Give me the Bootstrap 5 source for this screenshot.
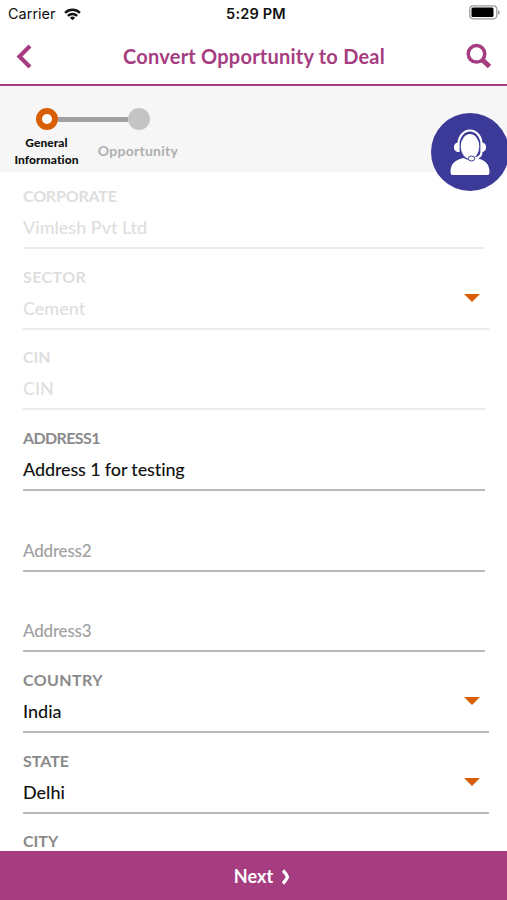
<!DOCTYPE html>
<html lang="en">
<head>
<meta charset="utf-8">
<meta name="viewport" content="width=device-width, initial-scale=1">
<title>Convert Opportunity to Deal</title>
<link href="https://cdn.jsdelivr.net/npm/bootstrap@5.3.0/dist/css/bootstrap.min.css" rel="stylesheet">
<style>
body{font-family:Lato,"Open Sans",sans-serif;color:#111;background:#fff}
.screen{height:900px;overflow:hidden}
.status{height:28px;font:15px/28px Inter,sans-serif;padding:0 7px 0 8px}
.carrier{font-size:14.5px}
.status .clock{left:0;right:0;font-weight:600;font-size:14.5px;letter-spacing:.2px;padding-left:5px}
.title-bar{height:58px;border-bottom:2px solid #a63d81;color:#a63d81;padding:0 15px 0 16px}
.title-bar h1{font-size:20px;line-height:55px;font-weight:700;letter-spacing:.22px;padding-left:8px}
.steps{height:86px;background:#f6f6f6;padding:22px 0 0 8px}
.step{width:77px;text-align:center}
.step-two{width:92px;margin-left:7px}
.step-dots{height:22px;padding-left:28px}
.dot{width:22px;height:22px;border-radius:50%;background:#c4c4c4}
.dot-on{background:#fff;border:6px solid #d95f07}
.dot-line{width:70px;height:5px;background:#a1a1a1}
.step-now{font-size:12px;line-height:17px;font-weight:900;letter-spacing:.05px;color:#111;padding-top:4px}
.step-next{font-size:14px;line-height:17px;font-weight:700;letter-spacing:.25px;color:#afafaf;padding-top:12px}
.help{right:-2px;top:113px;width:78px;height:78px}
.form-area{padding:0 22px 0 23px}
.field{height:80.67px;border-bottom:2px solid #b9b9b9;padding-bottom:8px}
.field:first-child{height:77px}
.field.pick{margin-right:-4px}
.field-name{font-size:16px;line-height:20px;font-weight:700;color:#8a8a8a;margin-bottom:9px}
.field-text{font-size:18px;line-height:24px;font-weight:500;color:#111}
.name-tight{letter-spacing:-.2px}
.name-digit{letter-spacing:-.62px}
.name-wide{letter-spacing:.4px}
.text-tight{letter-spacing:-.14px}
.field.off{border-color:#ececec}
.off .field-name,.off .field-text{color:#dedede}
.empty{padding-bottom:7px}
.empty .field-text{font-size:17px;color:#a0a0a0;letter-spacing:-.2px}
.caret{width:16px;height:8px;margin:0 9px 18px 0}
.next-bar{height:49px;background:#a63d81;color:#fff;font-size:18px;font-weight:700;letter-spacing:.1px;border:0;padding:2px 0 0 18px}
</style>
<script src="https://cdn.jsdelivr.net/npm/bootstrap@5.3.0/dist/js/bootstrap.bundle.min.js"></script>
</head>
<body>
<div class="screen d-flex flex-column position-relative">
  <div class="status d-flex align-items-center justify-content-between position-relative flex-shrink-0">
    <div class="d-flex align-items-center"><span class="carrier">Carrier</span>
      <svg class="ms-2" width="17" height="13" viewBox="0 0 18 14"><g fill="none" stroke="#111" stroke-width="2.600"><path d="M1 5.200a11.400 11.400 0 0 1 16 0"/><path d="M4 8.500a7.200 7.200 0 0 1 10 0"/></g><path d="M9 13.200L6.200 10.600a4 4 0 0 1 5.600 0z" fill="#111"/></svg>
    </div>
    <span class="clock position-absolute text-center">5:29 PM</span>
    <svg class="mb-1" width="31" height="15" viewBox="0 0 31 15"><rect x=".8" y=".8" width="27" height="13" rx="3.500" fill="#fff" stroke="#999" stroke-width="1.200"/><rect x="2.500" y="2.600" width="22" height="9.500" rx="1.500"/><path d="M29 5v5q1.700-.6 1.700-2.500T29 5z" fill="#999"/></svg>
  </div>
  <header class="title-bar d-flex align-items-center justify-content-between flex-shrink-0">
    <svg width="18" height="26" viewBox="0 0 18 26"><path d="M14 3L3.500 13.500L14 24" fill="none" stroke="#a63d81" stroke-width="4.200"/></svg>
    <h1 class="m-0">Convert Opportunity to Deal</h1>
    <svg width="26" height="26" viewBox="0 0 26 26" fill="none" stroke="#a63d81"><circle cx="10.500" cy="10.800" r="8.300" stroke-width="3.500"/><path d="M16.500 17l7 6.500" stroke-width="5"/></svg>
  </header>
  <section class="steps flex-shrink-0">
    <div class="step-dots d-flex align-items-center"><span class="dot dot-on"></span><span class="dot-line"></span><span class="dot"></span></div>
    <div class="d-flex"><div class="step step-now">General Information</div><div class="step step-two step-next">Opportunity</div></div>
  </section>
  <svg class="help position-absolute" viewBox="0 0 78 78"><circle cx="39" cy="39" r="39" fill="#3b3a99"/><g fill="#fff"><ellipse cx="39" cy="33.500" rx="9.300" ry="12.500"/><path d="M19.500 59.500c0-9.500 5-12.500 13-14.500q6.500 4 13 0c8 2 13 5 13 14.500q0 2.500-2 2.500H21.500q-2 0-2-2.500z"/><path d="M27 29.500v9.500a4.800 4.800 0 0 1 0-9.500zM51 29.500v9.500a4.800 4.800 0 0 0 0-9.500z"/></g><path d="M27.500 39v-8a11.500 13.500 0 0 1 23 0v8q0 6-8 6.500" fill="none" stroke="#fff" stroke-width="2.200"/><ellipse cx="40.500" cy="45.500" rx="3.200" ry="2.500" fill="#fff" stroke="#3b3a99"/></svg>
  <main class="form-area flex-grow-1 overflow-hidden">
    <div class="field off d-flex flex-column justify-content-end"><div class="field-name name-tight">CORPORATE</div><div class="field-text">Vimlesh Pvt Ltd</div></div>
    <div class="field off pick d-flex align-items-end justify-content-between"><div><div class="field-name name-wide">SECTOR</div><div class="field-text">Cement</div></div><svg class="caret" viewBox="0 0 16 8"><path d="M0 0h16L8 8z" fill="#d95f07"/></svg></div>
    <div class="field off d-flex flex-column justify-content-end"><div class="field-name">CIN</div><div class="field-text">CIN</div></div>
    <div class="field d-flex flex-column justify-content-end"><div class="field-name name-digit">ADDRESS1</div><div class="field-text text-tight">Address 1 for testing</div></div>
    <div class="field empty d-flex flex-column justify-content-end"><div class="field-text">Address2</div></div>
    <div class="field empty d-flex flex-column justify-content-end"><div class="field-text">Address3</div></div>
    <div class="field pick d-flex align-items-end justify-content-between"><div><div class="field-name name-wide">COUNTRY</div><div class="field-text">India</div></div><svg class="caret" viewBox="0 0 16 8"><path d="M0 0h16L8 8z" fill="#d95f07"/></svg></div>
    <div class="field pick d-flex align-items-end justify-content-between"><div><div class="field-name">STATE</div><div class="field-text">Delhi</div></div><svg class="caret" viewBox="0 0 16 8"><path d="M0 0h16L8 8z" fill="#d95f07"/></svg></div>
    <div class="field pick d-flex align-items-end"><div><div class="field-name">CITY</div><div class="field-text">&nbsp;</div></div></div>
  </main>
  <button type="button" class="next-bar w-100 d-flex align-items-center justify-content-center flex-shrink-0 gap-2">Next
    <svg width="10" height="16" viewBox="0 0 10 16"><path d="M2 1.500Q5 4.500 6.500 8Q5 11.500 2 14.500" fill="none" stroke="#fff" stroke-width="3.200"/></svg></button>
</div>
</body>
</html>
